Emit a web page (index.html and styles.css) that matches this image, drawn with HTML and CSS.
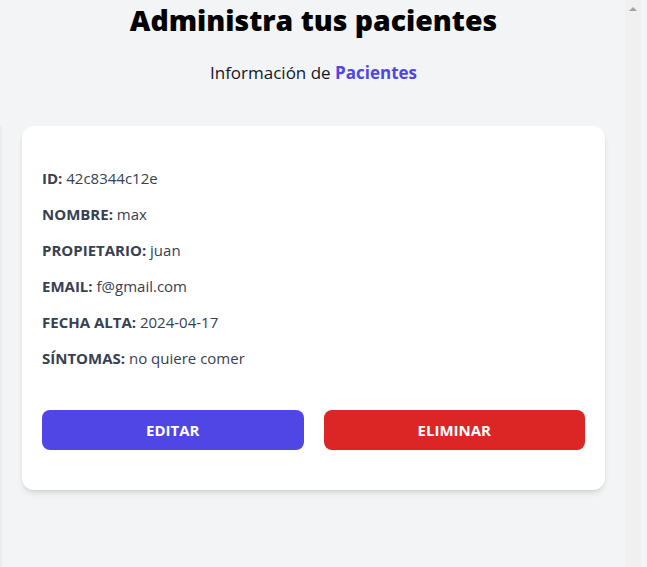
FILE: index.html
```html
<!DOCTYPE html>
<html lang="es">
<head>
<meta charset="utf-8">
<title>Pacientes</title>
<link rel="stylesheet" href="styles.css">
</head>
<body>
<div class="layout">
  <div class="edge"></div>
  <main class="list">
    <h2 class="title">Administra tus pacientes</h2>
    <p class="subtitle">Información de <span class="accent">Pacientes</span></p>
    <div class="card">
      <p class="row"><span class="label">ID:</span> <span class="value">42c8344c12e</span></p>
      <p class="row"><span class="label">Nombre:</span> <span class="value">max</span></p>
      <p class="row"><span class="label">Propietario:</span> <span class="value">juan</span></p>
      <p class="row"><span class="label">Email:</span> <span class="value">f@gmail.com</span></p>
      <p class="row"><span class="label">Fecha Alta:</span> <span class="value">2024-04-17</span></p>
      <p class="row"><span class="label">Síntomas:</span> <span class="value">no quiere comer</span></p>
      <div class="actions">
        <button class="btn btn-edit" type="button">Editar</button>
        <button class="btn btn-delete" type="button">Eliminar</button>
      </div>
    </div>
  </main>
  <div class="scrollbar"><span class="arrow"></span></div>
  <div class="gutter"></div>
</div>
</body>
</html>
```
FILE: styles.css
```css
* { box-sizing: border-box; }
html, body { margin: 0; padding: 0; }
body {
  background: #f3f4f6;
  font-family: "Open Sans", "Noto Sans", sans-serif;
  color: #374151;
  width: 647px;
  height: 567px;
  overflow: hidden;
}
.layout {
  display: flex;
  height: 567px;
}
.edge {
  width: 3px;
  flex: none;
  margin-top: 126px;
  background: linear-gradient(to right, #ebecef 0 2px, #f7f7f8 2px 3px);
  border-top-right-radius: 3px;
}
.list {
  flex: 1;
  padding: 0 20px 0 19px;
}
.title {
  margin: 0;
  text-align: center;
  font-family: "Open Sans", sans-serif;
  font-weight: 800;
  font-size: 28.4px;
  line-height: 40px;
  color: #000;
}
.subtitle {
  margin: 19px 0 0;
  text-align: center;
  font-size: 17px;
  line-height: 28px;
  color: #111827;
}
.accent {
  color: #4f46e5;
  font-weight: 700;
}
.card {
  margin-top: 39px;
  background: #fff;
  border-radius: 12px;
  box-shadow: 0 4px 6px -1px rgba(0,0,0,0.1), 0 2px 4px -2px rgba(0,0,0,0.1);
  padding: 40px 20px 40px;
}
.row {
  margin: 0 0 12px;
  font-size: 15px;
  line-height: 24px;
}
.label {
  font-weight: 700;
  text-transform: uppercase;
}
.actions {
  display: flex;
  gap: 20px;
  margin-top: 40px;
}
.btn {
  flex: 1;
  height: 40px;
  border: 0;
  border-radius: 8px;
  color: #fff;
  font-family: "Open Sans", "Noto Sans", sans-serif;
  font-weight: 700;
  font-size: 15px;
  text-transform: uppercase;
  cursor: pointer;
}
.btn-edit { background: #4f46e5; }
.btn-delete { background: #dc2626; }
.scrollbar {
  width: 16px;
  flex: none;
  background: #f0f0f0;
  position: relative;
}
.arrow {
  position: absolute;
  left: 4px;
  top: 7px;
  width: 0;
  height: 0;
  border-left: 4px solid transparent;
  border-right: 4px solid transparent;
  border-bottom: 4px solid #a3a3a3;
}
.gutter {
  width: 6px;
  flex: none;
  background: #f3f4f6;
}
```
